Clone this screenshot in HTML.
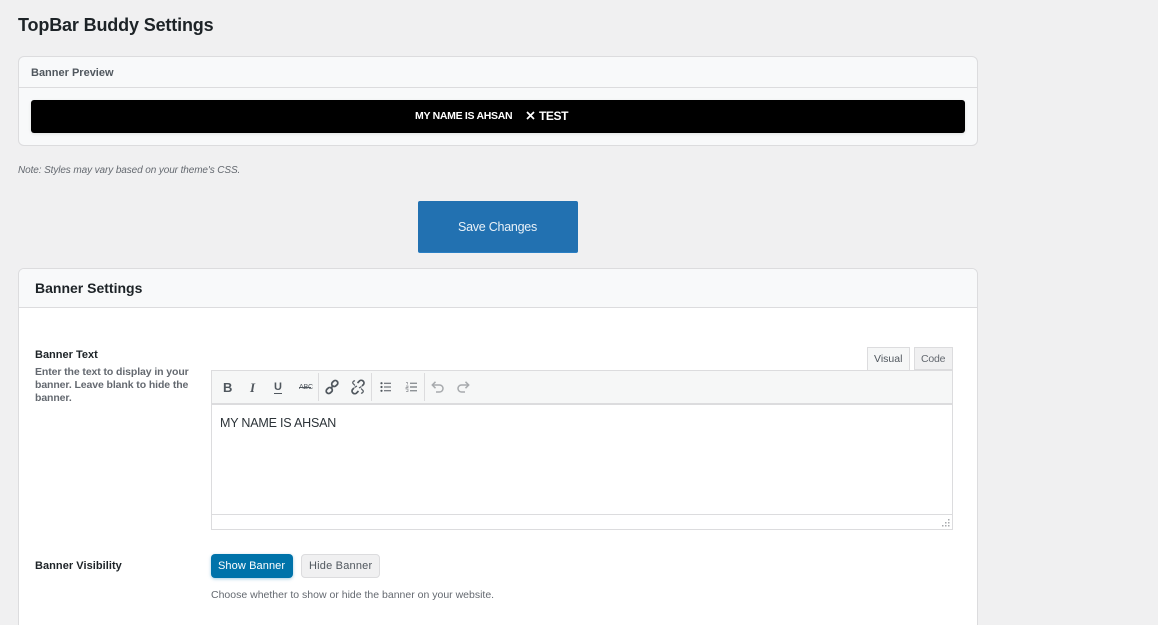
<!DOCTYPE html>
<html><head><meta charset="utf-8"><style>
html,body{margin:0;padding:0;width:1158px;height:625px;overflow:hidden;background:#f0f0f1}
body{font-family:"Liberation Sans",sans-serif;position:relative}
.a{position:absolute;box-sizing:border-box}
.t{position:absolute;white-space:nowrap;line-height:1}
svg{position:absolute;overflow:visible}
</style></head><body>
<div class="t" style="left:18px;top:16px;font-size:18px;font-weight:700;color:#1d2327;letter-spacing:-.15px">TopBar Buddy Settings</div>

<div class="a" style="left:18px;top:56px;width:960px;height:90px;background:#f8f9fa;border:1px solid #dcdcde;border-radius:6px"></div>
<div class="a" style="left:19px;top:87px;width:958px;height:1px;background:#dcdcde"></div>
<div class="t" style="left:31px;top:68px;font-size:11px;font-weight:700;color:#50575e">Banner Preview</div>
<div class="a" style="left:31px;top:100px;width:934px;height:33px;background:#000;border-radius:3px;box-shadow:0 1px 3px rgba(0,0,0,.1)"></div>
<div class="t" style="left:415px;top:111px;font-size:10.5px;font-weight:700;color:#fff;letter-spacing:-.3px">MY NAME IS AHSAN</div>
<svg style="left:526px;top:111px" width="9" height="9" viewBox="0 0 9 9"><path d="M1 1L8 8M8 1L1 8" stroke="#fff" stroke-width="1.7"/></svg>
<div class="t" style="left:539px;top:110px;font-size:12px;font-weight:700;color:#fff;letter-spacing:-.4px">TEST</div>
<div class="t" style="left:18px;top:166px;font-size:10px;font-style:italic;color:#646970;letter-spacing:-.1px">Note: Styles may vary based on your theme's CSS.</div>

<div class="a" style="left:418px;top:201px;width:160px;height:52px;background:#2271b1;border-radius:2px;border-bottom:1px solid #2a7fc4"></div>
<div class="t" style="left:458px;top:221px;font-size:12.5px;color:#e8f1f8;letter-spacing:-.25px">Save Changes</div>

<div class="a" style="left:18px;top:268px;width:960px;height:380px;background:#fff;border:1px solid #dcdcde;border-radius:6px"></div>
<div class="a" style="left:19px;top:269px;width:958px;height:39px;background:#f8f9fa;border-bottom:1px solid #dcdcde;border-radius:5px 5px 0 0"></div>
<div class="t" style="left:35px;top:281px;font-size:14px;font-weight:700;color:#1d2327">Banner Settings</div>

<div class="t" style="left:35px;top:350px;font-size:11px;font-weight:700;color:#1d2327">Banner Text</div>
<div class="t" style="left:35px;top:366px;font-size:10.5px;font-weight:700;color:#646970;letter-spacing:-.1px;line-height:13px">Enter the text to display in your<br>banner. Leave blank to hide the<br>banner.</div>

<div class="a" style="left:867px;top:347px;width:43px;height:24px;background:#f6f7f7;border:1px solid #dcdcde;border-bottom:none"></div>
<div class="t" style="left:874px;top:354px;font-size:10.5px;color:#50575e">Visual</div>
<div class="a" style="left:914px;top:347px;width:39px;height:23px;background:#f0f0f1;border:1px solid #dcdcde"></div>
<div class="t" style="left:921px;top:354px;font-size:10.5px;color:#646970;letter-spacing:-.2px">Code</div>

<div class="a" style="left:211px;top:370px;width:742px;height:160px;background:#fff;border:1px solid #dcdcde"></div>
<div class="a" style="left:212px;top:371px;width:740px;height:34px;background:#f6f7f7;border-bottom:2px solid #dcdcde"></div>
<div class="a" style="left:318px;top:373px;width:1px;height:28px;background:#dcdcde"></div>
<div class="a" style="left:371px;top:373px;width:1px;height:28px;background:#dcdcde"></div>
<div class="a" style="left:424px;top:373px;width:1px;height:28px;background:#dcdcde"></div>

<div class="t" style="left:223px;top:381px;font-size:13px;font-weight:700;color:#50575e">B</div>
<div class="t" style="left:250px;top:381px;font-size:13px;font-weight:700;font-style:italic;color:#50575e;font-family:'Liberation Serif'">I</div>
<div class="t" style="left:274px;top:382px;font-size:11px;font-weight:700;color:#50575e;border-bottom:1px solid #50575e">U</div>
<div class="t" style="left:299px;top:384px;font-size:7px;color:#50575e;letter-spacing:-.2px">ABC</div>
<div class="a" style="left:299px;top:387px;width:12px;height:1px;background:#50575e"></div>

<svg style="left:325px;top:380px" width="14" height="14" viewBox="0 0 14 14" fill="none" stroke="#50575e" stroke-width="1.8"><rect x="6.500" y="1" width="6.500" height="5" rx="2.500" transform="rotate(-45 9.750 3.500)"/><rect x="1" y="8" width="6.500" height="5" rx="2.500" transform="rotate(-45 4.250 10.500)"/><path d="M5.500 8.500L8.500 5.500"/></svg>
<svg style="left:351px;top:380px" width="14" height="14" viewBox="0 0 14 14" fill="none" stroke="#50575e" stroke-width="1.700"><path d="M6.500 3L8 1.500A2.600 2.600 0 0 1 12.500 4.500L11 6M7.500 11L6 12.500A2.600 2.600 0 0 1 1.500 9.500L3 8"/><path d="M4 5.500L2.500 4A1.700 1.700 0 0 1 4 1M10 8.500L11.500 10A1.700 1.700 0 0 1 10 13M8 8L10.500 6.500M6 6L3.500 7.500" stroke-width="1.200"/></svg>
<svg style="left:380px;top:382px" width="11" height="10" viewBox="0 0 11 10" fill="none"><g fill="#50575e"><circle cx="1.500" cy="1.200" r="1.100"/><circle cx="1.500" cy="5" r="1.100"/><circle cx="1.500" cy="8.800" r="1.100"/></g><path d="M4 1.200H11M4 5H11M4 8.800H11" stroke="#50575e"/></svg>
<svg style="left:406px;top:382px" width="11" height="10" viewBox="0 0 11 10" fill="none"><path d="M0 .5H1.500V2.500M0 4H2V5.500H0V7H2V9.500H0" stroke="#8c8f94" stroke-width=".7"/><path d="M4 1.200H11M4 5H11M4 8.800H11" stroke="#50575e" stroke-width=".9"/></svg>
<svg style="left:431px;top:381px" width="13" height="12" viewBox="0 0 13 12" fill="none" stroke="#a7aaad" stroke-width="1.500"><path d="M1.500 4H8.500A3.500 3.500 0 0 1 8.500 11H5"/><path d="M4.500 .8L1.300 4L4.500 7.200"/></svg>
<svg style="left:457px;top:381px" width="13" height="12" viewBox="0 0 13 12" fill="none" stroke="#a7aaad" stroke-width="1.500"><path d="M11.500 4H4.500A3.500 3.500 0 0 0 4.500 11H8"/><path d="M8.500 .8L11.700 4L8.500 7.200"/></svg>

<div class="t" style="left:220px;top:417px;font-size:12.5px;color:#2c3338;letter-spacing:-.2px">MY NAME IS AHSAN</div>
<div class="a" style="left:212px;top:514px;width:740px;height:1px;background:#dcdcde"></div>
<svg style="left:941px;top:518px" width="9" height="9" viewBox="0 0 9 9" fill="#a7aaad"><rect x="7" y="1" width="1.500" height="1.500"/><rect x="4" y="4" width="1.500" height="1.500"/><rect x="7" y="4" width="1.500" height="1.500"/><rect x="1" y="7" width="1.500" height="1.500"/><rect x="4" y="7" width="1.500" height="1.500"/><rect x="7" y="7" width="1.500" height="1.500"/></svg>

<div class="t" style="left:35px;top:561px;font-size:11px;font-weight:700;color:#1d2327;letter-spacing:.05px">Banner Visibility</div>
<div class="a" style="left:211px;top:554px;width:82px;height:24px;background:#0073aa;border-radius:4px;box-shadow:0 1px 3px rgba(0,115,170,.35)"></div>
<div class="t" style="left:218px;top:561px;font-size:11px;color:#fff;letter-spacing:.1px">Show Banner</div>
<div class="a" style="left:301px;top:554px;width:79px;height:24px;background:#f0f0f1;border:1px solid #dcdcde;border-radius:4px"></div>
<div class="t" style="left:309px;top:561px;font-size:11px;color:#50575e;letter-spacing:.2px">Hide Banner</div>
<div class="t" style="left:211px;top:590px;font-size:10.5px;color:#646970">Choose whether to show or hide the banner on your website.</div>
</body></html>
